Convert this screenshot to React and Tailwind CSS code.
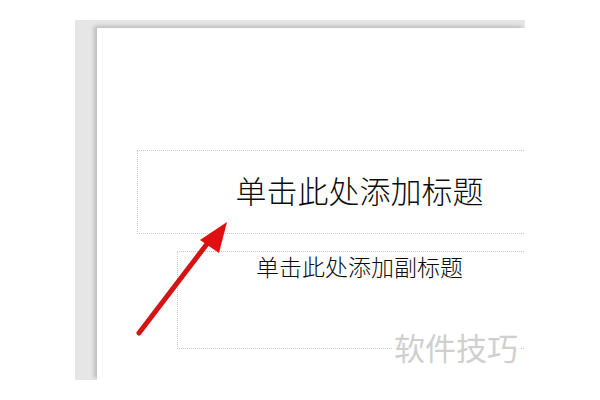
export default function App() {
  return (
    <div className="relative w-[600px] h-[400px] bg-white overflow-hidden">
      {/* gray workspace frame */}
      <div className="ml-[75px] mt-[20px] w-[450px] h-[360px] bg-[#e6e6e6] pt-[8px] pl-[22px] overflow-hidden">
        <div className="relative h-[352px] bg-white shadow-[-3px_-2px_4px_rgba(0,0,0,0.18)] pt-[122px]">
          <div className="ml-[40px] w-[445px] h-[84px] border border-dotted border-[#c8c8c8] flex items-center justify-center pb-[6px]">
            <span className="text-[31px] leading-none text-[#0d0d0d] font-['Noto_Sans_CJK_SC',sans-serif] font-light">
              单击此处添加标题
            </span>
          </div>
          <div className="mt-[17px] ml-[80px] w-[365px] h-[98px] border border-dotted border-[#c8c8c8] flex justify-center pt-[2px]">
            <span className="text-[23px] leading-[24px] text-[#0d0d0d] font-['Noto_Sans_CJK_SC',sans-serif] font-light">
              单击此处添加副标题
            </span>
          </div>
        </div>
      </div>

      {/* watermark */}
      <div className="absolute left-[392px] top-[328px] bg-white/80 px-[2px] text-[31px] leading-[38px] text-[#cfcfcf] font-['Noto_Sans_CJK_SC',sans-serif]">
        软件技巧
      </div>

      {/* red arrow */}
      <svg className="absolute left-0 top-0" width="600" height="400" viewBox="0 0 600 400">
        <line x1="139" y1="333" x2="210" y2="240" stroke="#d41414" strokeWidth="5" strokeLinecap="round" />
        <polygon points="227,222 200,240 219,253" fill="#e01010" />
      </svg>
    </div>
  );
}
